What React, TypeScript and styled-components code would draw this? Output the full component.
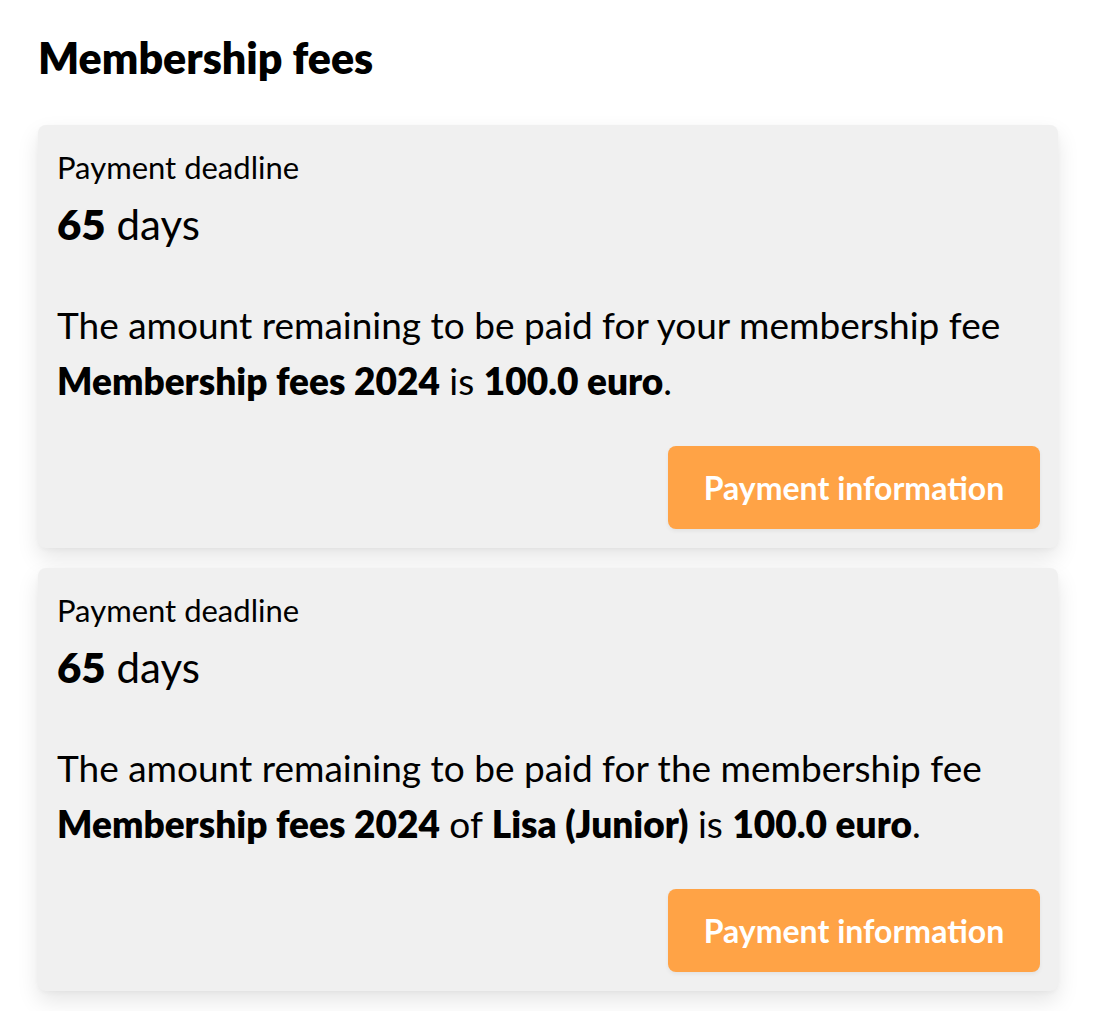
import React from "react";
import styled, { createGlobalStyle } from "styled-components";

const Global = createGlobalStyle`
  html, body { margin: 0; padding: 0; background: #ffffff; }
  body { font-family: "Lato", "Noto Sans", sans-serif; color: #000; }
`;

const Page = styled.main`
  padding: 24px 42px 20px 38px;
  display: flex;
  flex-direction: column;
`;

const Title = styled.h1`
  margin: 0 0 33px 0;
  font-size: 43px;
  line-height: 68px;
  font-weight: 800;
`;

const List = styled.div`
  display: flex;
  flex-direction: column;
  gap: 20px;
`;

const Card = styled.section`
  background: #f0f0f0;
  border-radius: 8px;
  padding: 20px 18px 19px 19px;
  box-shadow: 0 10px 22px rgba(0, 0, 0, 0.1), 0 2px 4px rgba(0, 0, 0, 0.03);
  display: flex;
  flex-direction: column;
`;

const Label = styled.div`
  font-size: 31px;
  line-height: 44px;
  font-weight: 400;
`;

const Value = styled.div`
  margin-top: 11px;
  font-size: 42px;
  line-height: 48px;
  font-weight: 400;
  b { font-weight: 800; }
`;

const Text = styled.p`
  margin: 49px 0 37px 0;
  font-size: 37px;
  line-height: 56px;
  font-weight: 400;
  b { font-weight: 800; }
`;

const Actions = styled.div`
  display: flex;
  justify-content: flex-end;
`;

const Button = styled.button`
  width: 372px;
  height: 83px;
  border: none;
  border-radius: 8px;
  background: #ffa346;
  color: #ffffff;
  font-family: inherit;
  font-size: 32px;
  font-weight: 700;
  cursor: pointer;
  box-shadow: 0 2px 4px rgba(0, 0, 0, 0.06);
`;

type Fee = { id: number; text: React.ReactNode };

const fees: Fee[] = [
  {
    id: 1,
    text: (
      <>
        The amount remaining to be paid for your membership fee{" "}
        <b>Membership fees 2024</b> is <b>100.0 euro</b>.
      </>
    ),
  },
  {
    id: 2,
    text: (
      <>
        The amount remaining to be paid for the membership fee{" "}
        <b>Membership fees 2024</b> of <b>Lisa (Junior)</b> is{" "}
        <b>100.0 euro</b>.
      </>
    ),
  },
];

export default function App() {
  return (
    <>
      <Global />
      <Page>
        <Title>Membership fees</Title>
        <List>
          {fees.map((f) => (
            <Card key={f.id}>
              <Label>Payment deadline</Label>
              <Value>
                <b>65</b> days
              </Value>
              <Text>{f.text}</Text>
              <Actions>
                <Button>Payment information</Button>
              </Actions>
            </Card>
          ))}
        </List>
      </Page>
    </>
  );
}
